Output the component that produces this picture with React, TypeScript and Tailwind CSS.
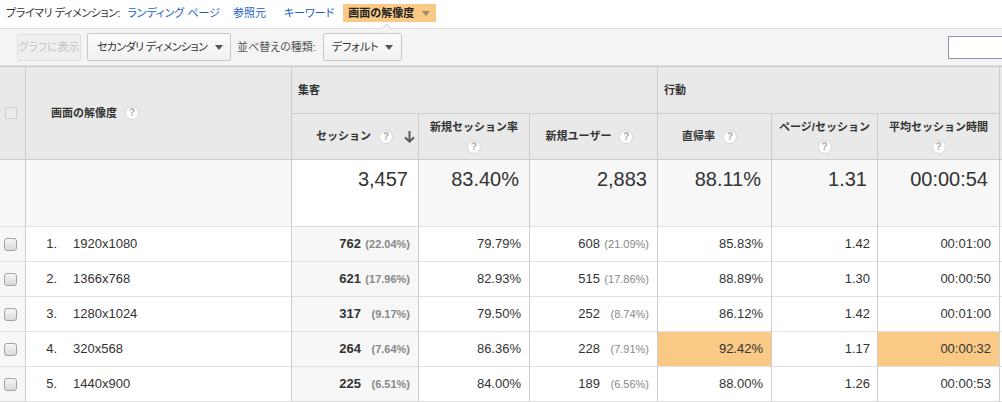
import React from "react";

type Row = {
  n: number;
  dim: string;
  s: string;
  sp: string;
  nsr: string;
  nu: string;
  nup: string;
  br: string;
  pps: string;
  dur: string;
  hot?: boolean;
};

const rows: Row[] = [
  { n: 1, dim: "1920x1080", s: "762", sp: "(22.04%)", nsr: "79.79%", nu: "608", nup: "(21.09%)", br: "85.83%", pps: "1.42", dur: "00:01:00" },
  { n: 2, dim: "1366x768", s: "621", sp: "(17.96%)", nsr: "82.93%", nu: "515", nup: "(17.86%)", br: "88.89%", pps: "1.30", dur: "00:00:50" },
  { n: 3, dim: "1280x1024", s: "317", sp: "(9.17%)", nsr: "79.50%", nu: "252", nup: "(8.74%)", br: "86.12%", pps: "1.42", dur: "00:01:00" },
  { n: 4, dim: "320x568", s: "264", sp: "(7.64%)", nsr: "86.36%", nu: "228", nup: "(7.91%)", br: "92.42%", pps: "1.17", dur: "00:00:32", hot: true },
  { n: 5, dim: "1440x900", s: "225", sp: "(6.51%)", nsr: "84.00%", nu: "189", nup: "(6.56%)", br: "88.00%", pps: "1.26", dur: "00:00:53" },
];

function Help() {
  return (
    <span className="inline-flex h-[14px] w-[14px] shrink-0 items-center justify-center rounded-full border border-[#d6d6d6] bg-white text-[10px] font-bold leading-none text-[#aaaaaa]">
      ?
    </span>
  );
}

function Caret({ color = "border-t-[#555]" }: { color?: string }) {
  return (
    <span
      className={`inline-block h-0 w-0 border-x-[4px] border-t-[5px] border-x-transparent ${color}`}
    />
  );
}

const head = "border-r border-b border-[#cccccc] bg-[#e9e9e9]";
const body = "border-r border-b border-r-[#cccccc] border-b-[#e0e0e0]";

export default function App() {
  return (
    <div className="w-[1002px] h-[402px] overflow-hidden bg-white font-['Liberation_Sans','Noto_Sans_CJK_JP',sans-serif] text-[#333]">
      {/* プライマリ ディメンション */}
      <div className="relative flex h-[29px] items-start whitespace-nowrap border-b border-[#dddddd] pl-[6px] pt-[4px] text-[11px] [font-feature-settings:'palt']">
        <span className="flex h-[18px] items-center tracking-[-0.4px] text-[#333]">プライマリ ディメンション:</span>
        <a className="ml-[7px] flex h-[18px] items-center text-[#1e5fc4]">ランディング ページ</a>
        <a className="ml-[13px] flex h-[18px] items-center text-[#1e5fc4]">参照元</a>
        <a className="ml-[18px] flex h-[18px] items-center text-[#1e5fc4]">キーワード</a>
        <span className="ml-[9px] flex h-[18px] items-center gap-[8px] bg-[#f9c985] pl-[5px] pr-[6px] text-[11px] font-bold text-[#222]">
          画面の解像度
          <Caret color="border-t-[#a08a6a]" />
        </span>
        <span className="absolute left-[383px] top-[25px] h-[7px] w-[7px] rotate-45 border-l border-t border-[#dddddd] bg-[#f4f4f4]" />
      </div>

      {/* ツールバー */}
      <div className="flex h-[37px] items-center overflow-hidden whitespace-nowrap border-b border-[#dddddd] bg-[#f4f4f4] pl-[17px] text-[11px] [font-feature-settings:'palt']">
        <button className="flex h-[27px] w-[64px] items-center justify-center rounded-[2px] border border-[#e0e0e0] bg-[#efefef] text-[#c4c4c4]">
          グラフに表示
        </button>
        <button className="ml-[6px] flex h-[28px] w-[144px] items-center rounded-[2px] border border-[#c8c8c8] bg-gradient-to-b from-[#fbfbfb] to-[#f1f1f1] pl-[9px] text-[#333]">
          <span className="tracking-[-0.6px]">セカンダリ ディメンション</span>
          <span className="ml-auto mr-[7px] flex">
            <Caret />
          </span>
        </button>
        <span className="ml-[6px] text-[#555]">並べ替えの種類:</span>
        <button className="ml-[7px] flex h-[28px] w-[79px] items-center rounded-[2px] border border-[#c8c8c8] bg-gradient-to-b from-[#fbfbfb] to-[#f1f1f1] pl-[8px] text-[#333]">
          デフォルト
          <span className="ml-auto mr-[8px] flex">
            <Caret />
          </span>
        </button>
        <input className="ml-auto -mr-[16px] h-[23px] w-[70px] shrink-0 border border-[#8e92b2] bg-white outline-none" />
      </div>

      {/* 表 */}
      <div className="grid grid-cols-[26px_266px_127px_111px_128px_114px_106px_122px_1fr] grid-rows-[47px_46px_67px_35px_35px_35px_35px_35px] border-t border-[#cccccc]">
        {/* header */}
        <div className={`${head} row-span-2 flex items-center pl-[5px]`}>
          <span className="h-[12px] w-[12px] border border-[#cfcfcf] bg-[#ececec]" />
        </div>
        <div className={`${head} row-span-2 flex items-center gap-[8px] pl-[25px] text-[11px] font-bold`}>
          画面の解像度 <Help />
        </div>
        <div className={`${head} col-span-3 flex items-center pl-[6px] text-[11px] font-bold`}>集客</div>
        <div className={`${head} col-span-3 flex items-center pl-[6px] text-[11px] font-bold`}>行動</div>
        <div className={`${head} row-span-2 border-r-0`} />

        <div className={`${head} flex items-center pl-[24px] pr-[3px] text-[11px] font-bold`}>
          <span className="flex items-center gap-[8px]">
            セッション <Help />
          </span>
          <svg className="ml-auto" width="11" height="12" viewBox="0 0 11 12">
            <path d="M5.5 0v10.5M1 6.2l4.5 4.5 4.5-4.5" stroke="#5a5a5a" strokeWidth="2" fill="none" />
          </svg>
        </div>
        <div className={`${head} flex flex-col items-center justify-center gap-[4px] text-[11px] font-bold`}>
          <span>新規セッション率</span>
          <Help />
        </div>
        <div className={`${head} flex items-center justify-center gap-[8px] pr-[8px] text-[11px] font-bold`}>
          新規ユーザー <Help />
        </div>
        <div className={`${head} flex items-center justify-center gap-[8px] pr-[10px] text-[11px] font-bold`}>
          直帰率 <Help />
        </div>
        <div className={`${head} flex flex-col items-center justify-center gap-[4px] text-[11px] font-bold`}>
          <span>ページ/セッション</span>
          <Help />
        </div>
        <div className={`${head} flex flex-col items-center justify-center gap-[4px] text-[11px] font-bold`}>
          <span>平均セッション時間</span>
          <Help />
        </div>

        {/* totals */}
        <div className={`${body} border-b-[#dddddd] bg-[#f7f7f7]`} />
        <div className={`${body} border-b-[#dddddd] bg-[#f7f7f7]`} />
        <div className={`${body} border-b-[#dddddd] bg-white pr-[10px] pt-[7px] text-right text-[20px] leading-6`}>3,457</div>
        <div className={`${body} border-b-[#dddddd] bg-[#f7f7f7] pr-[10px] pt-[7px] text-right text-[20px] leading-6`}>83.40%</div>
        <div className={`${body} border-b-[#dddddd] bg-[#f7f7f7] pr-[10px] pt-[7px] text-right text-[20px] leading-6`}>2,883</div>
        <div className={`${body} border-b-[#dddddd] bg-[#f7f7f7] pr-[10px] pt-[7px] text-right text-[20px] leading-6`}>88.11%</div>
        <div className={`${body} border-b-[#dddddd] bg-[#f7f7f7] pr-[10px] pt-[7px] text-right text-[20px] leading-6`}>1.31</div>
        <div className={`${body} border-b-[#dddddd] bg-[#f7f7f7] pr-[11px] pt-[7px] text-right text-[20px] leading-6`}>00:00:54</div>
        <div className={`${body} border-b-[#dddddd] border-r-0 bg-[#f7f7f7]`} />

        {/* rows */}
        {rows.map((r) => (
          <React.Fragment key={r.n}>
            <div className={`${body} flex items-center bg-[#f7f7f7] pl-[4px]`}>
              <span className="h-[13px] w-[13px] rounded-[3px] border border-[#a3a3a3] bg-gradient-to-b from-[#f6f6f6] to-[#dadada]" />
            </div>
            <div className={`${body} flex items-center text-[13px]`}>
              <span className="w-[31px] text-right">{r.n}.</span>
              <span className="ml-[16px]">{r.dim}</span>
            </div>
            <div className={`${body} flex items-center justify-end bg-[#f7f7f7] pr-[8px] text-[13px] font-bold`}>
              <span>{r.s}</span>
              <span className="w-[49px] text-right text-[11px] text-[#888]">{r.sp}</span>
            </div>
            <div className={`${body} flex items-center justify-end pr-[8px] text-[13px]`}>{r.nsr}</div>
            <div className={`${body} flex items-center justify-end pr-[8px] text-[13px]`}>
              <span>{r.nu}</span>
              <span className="w-[49px] text-right text-[11px] text-[#888]">{r.nup}</span>
            </div>
            <div className={`${body} flex items-center justify-end pr-[8px] text-[13px] ${r.hot ? "bg-[#f9c985]" : ""}`}>{r.br}</div>
            <div className={`${body} flex items-center justify-end pr-[7px] text-[13px]`}>{r.pps}</div>
            <div className={`${body} flex items-center justify-end pr-[8px] text-[13px] ${r.hot ? "bg-[#f9c985]" : ""}`}>{r.dur}</div>
            <div className={`${body} border-r-0`} />
          </React.Fragment>
        ))}
      </div>
    </div>
  );
}
